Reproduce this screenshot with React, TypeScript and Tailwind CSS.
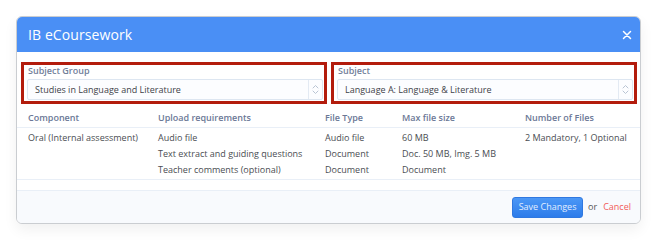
import React from "react";

const rows = [
  ["Audio file", "Audio file", "60 MB"],
  ["Text extract and guiding questions", "Document", "Doc. 50 MB, Img. 5 MB"],
  ["Teacher comments (optional)", "Document", "Document"],
];

function Chevrons() {
  return (
    <svg width="7" height="11" viewBox="0 0 7 11" fill="none" stroke="#b9c4d3" strokeWidth="1" strokeLinecap="round" strokeLinejoin="round">
      <path d="M1 4 L3.5 1.5 L6 4" />
      <path d="M1 7 L3.5 9.5 L6 7" />
    </svg>
  );
}

function SelectBox({ label, value }: { label: string; value: string }) {
  return (
    <div className="border-[3px] border-[#b31c0c] pl-[3px] pr-[1px] pb-[1px]">
      <div className="text-[9px] leading-[12px] font-semibold text-[#71809a] pl-[1px] mb-[2px]">{label}</div>
      <div className="flex h-[21px] items-stretch border border-[#dde6f1] rounded-[2px] bg-[#fcfdff]">
        <div className="flex-1 flex items-center pl-[7px] text-[9px] text-[#3e4248]">{value}</div>
        <div className="w-[14px] border-l border-[#e3eaf3] flex items-center justify-center">
          <Chevrons />
        </div>
      </div>
    </div>
  );
}

export default function App() {
  return (
    <div className="w-[670px] h-[252px] bg-white pt-[16px] pl-[16px]" style={{ fontFamily: '"Open Sans", sans-serif' }}>
      <div className="w-[625px] h-[208px] border border-[#cacdd1] rounded-[6px] overflow-hidden bg-white flex flex-col shadow-[0_6px_14px_rgba(0,0,0,0.06)]">
        {/* Header */}
        <div className="h-[35px] shrink-0 bg-[#4a8ff5] flex items-center justify-between pl-[11px] pr-[8px]">
          <span className="text-[14px] text-white tracking-[0.1px]">IB eCoursework</span>
          <svg width="10" height="10" viewBox="0 0 10 10" stroke="white" strokeWidth="1.5" strokeLinecap="round">
            <path d="M1.5 1.5 L8.5 8.5 M8.5 1.5 L1.5 8.5" />
          </svg>
        </div>

        {/* Selects */}
        <div className="grid grid-cols-2 gap-[4px] pl-[4px] pr-[3px] mt-[10px]">
          <SelectBox label="Subject Group" value="Studies in Language and Literature" />
          <SelectBox label="Subject" value="Language A: Language & Literature" />
        </div>

        {/* Table */}
        <div className="grid grid-cols-[130px_167px_77px_123px_1fr] px-[11px] pt-[8px] pb-[3px] border-b border-[#e9eff7] text-[9px] leading-[12px] font-semibold text-[#6b7896]">
          <div>Component</div>
          <div>Upload requirements</div>
          <div>File Type</div>
          <div>Max file size</div>
          <div>Number of Files</div>
        </div>
        <div className="grid grid-cols-[130px_167px_77px_123px_1fr] px-[11px] pt-[2px] pb-[1px] border-b border-[#e9eff7] text-[9px] leading-[16px] text-[#4a4d52]">
          <div>Oral (Internal assessment)</div>
          <div>{rows.map((r) => <div key={r[0]}>{r[0]}</div>)}</div>
          <div>{rows.map((r, i) => <div key={i}>{r[1]}</div>)}</div>
          <div>{rows.map((r, i) => <div key={i}>{r[2]}</div>)}</div>
          <div>2 Mandatory, 1 Optional</div>
        </div>

        {/* Footer */}
        <div className="mt-[10px] flex-1 border-t border-[#e9eff7] bg-[#f8fafd] flex items-center justify-end pr-[9px] gap-[4px]">
          <button className="h-[21px] w-[71px] rounded-[3px] border border-[#2f78e0] bg-gradient-to-b from-[#4a97f6] to-[#2d7cea] text-[9px] text-[#e3eeff]">
            Save Changes
          </button>
          <span className="text-[9px] text-[#555] ml-[1px]">or</span>
          <span className="text-[9px] text-[#f25a5a] ml-[2px]">Cancel</span>
        </div>
      </div>
    </div>
  );
}
